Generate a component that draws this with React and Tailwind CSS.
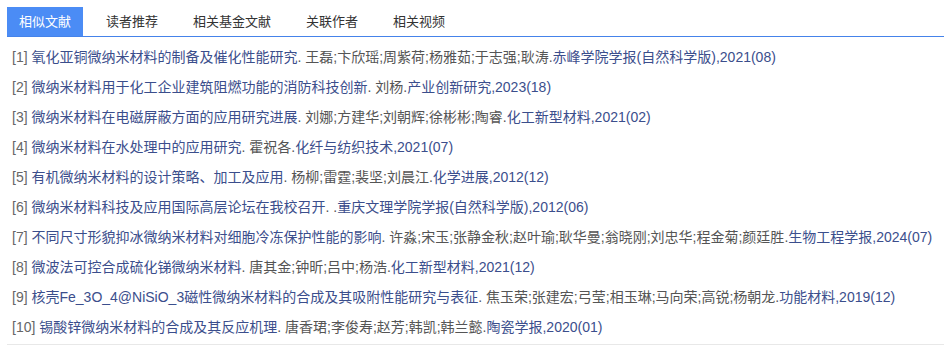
import React from "react";

const tabs = ["相似文献", "读者推荐", "相关基金文献", "关联作者", "相关视频"];

const items = [
  ["氧化亚铜微纳米材料的制备及催化性能研究", "王磊;卞欣瑶;周紫荷;杨雅茹;于志强;耿涛", "赤峰学院学报(自然科学版),2021(08)"],
  ["微纳米材料用于化工企业建筑阻燃功能的消防科技创新", "刘杨", "产业创新研究,2023(18)"],
  ["微纳米材料在电磁屏蔽方面的应用研究进展", "刘娜;方建华;刘朝辉;徐彬彬;陶睿", "化工新型材料,2021(02)"],
  ["微纳米材料在水处理中的应用研究", "霍祝各", "化纤与纺织技术,2021(07)"],
  ["有机微纳米材料的设计策略、加工及应用", "杨柳;雷霆;裴坚;刘晨江", "化学进展,2012(12)"],
  ["微纳米材料科技及应用国际高层论坛在我校召开", "", "重庆文理学院学报(自然科学版),2012(06)"],
  ["不同尺寸形貌抑冰微纳米材料对细胞冷冻保护性能的影响", "许淼;宋玉;张静金秋;赵叶瑜;耿华曼;翁晓刚;刘忠华;程金菊;颜廷胜", "生物工程学报,2024(07)"],
  ["微波法可控合成硫化锑微纳米材料", "唐其金;钟昕;吕中;杨浩", "化工新型材料,2021(12)"],
  ["核壳Fe_3O_4@NiSiO_3磁性微纳米材料的合成及其吸附性能研究与表征", "焦玉荣;张建宏;弓莹;相玉琳;马向荣;高锐;杨朝龙", "功能材料,2019(12)"],
  ["锡酸锌微纳米材料的合成及其反应机理", "唐香珺;李俊寿;赵芳;韩凯;韩兰懿", "陶瓷学报,2020(01)"],
];

export default function App() {
  return (
    <div
      className="w-[944px] h-[357px] bg-white pl-[7px] pt-[7px]"
      style={{ fontFamily: '"Liberation Sans", "Noto Sans CJK SC", sans-serif' }}
    >
      <div className="flex gap-[11px] border-b border-[#4583ea]">
        {tabs.map((t, i) => (
          <div
            key={t}
            className={
              "h-[29px] px-3 flex items-center text-[13px] leading-none " +
              (i === 0 ? "bg-[#4b8cf5] text-white" : "text-[#333333]")
            }
          >
            {t}
          </div>
        ))}
      </div>
      <div className="pt-[5px] pb-[2px] pl-[5px] border-b border-[#e8e8e8]">
        {items.map((it, i) => (
          <div key={i} className="h-[30px] leading-[30px] text-[14px] whitespace-nowrap">
            <span className="text-[#666666]">[{i + 1}] </span>
            <span className="text-[#3b4e8c]">{it[0]}</span>
            <span className="text-[#555555]">. {it[1]}.</span>
            <span className="text-[#3b4e8c]">{it[2]}</span>
          </div>
        ))}
      </div>
    </div>
  );
}
